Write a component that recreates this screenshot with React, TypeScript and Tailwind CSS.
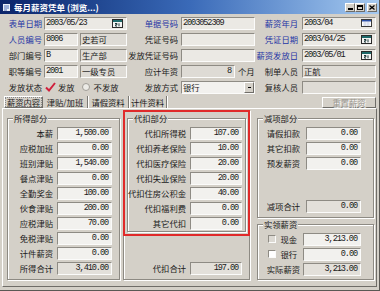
import React from 'react';

const NUM = "font-['Liberation_Mono',monospace] text-[8.6px] tracking-[-1.1px]";
const SUNK = 'border border-t-[#8e8b84] border-l-[#8e8b84] border-r-[#fbfbfa] border-b-[#fbfbfa]';
const RAISED = 'border border-t-white border-l-white border-r-[#6f6d68] border-b-[#6f6d68]';

function Field({ className = '', children }: { className?: string; children?: React.ReactNode }) {
  return (
    <div className={`h-[13px] flex items-center px-[1px] overflow-hidden whitespace-nowrap ${SUNK} ${className}`}>
      {children}
    </div>
  );
}

function Label({ className = '', blue, children }: { className?: string; blue?: boolean; children: React.ReactNode }) {
  return (
    <div className={`text-right whitespace-nowrap leading-none ${blue ? 'text-[#1f35a5]' : 'text-[#1a1a1a]'} ${className}`}>
      {children}
    </div>
  );
}

function CalIcon({ blank }: { blank?: boolean }) {
  if (blank) {
    return (
      <svg width="11" height="8" viewBox="0 0 11 8" className="ml-auto mr-[2px] shrink-0">
        <rect x="0.5" y="0.5" width="10" height="7" fill="#fff" stroke="#3a3a3a" />
        <rect x="1" y="1" width="9" height="1.5" fill="#2a4fa8" />
        <path d="M2 4h7M2 6h7M4 3v4M7 3v4" stroke="#b8c4dc" strokeWidth="0.6" />
      </svg>
    );
  }
  return (
    <svg width="11" height="9" viewBox="0 0 11 9" className="ml-auto mr-[2px] shrink-0">
      <rect x="0.5" y="0.5" width="10" height="8" fill="#f4f4f4" stroke="#2a2a2a" />
      <rect x="1" y="1" width="9" height="2" fill="#1e6a6a" />
      <path d="M3 4.5h2v1.2H3.6v1.4H5M7 4.3v3" stroke="#1e3a3a" strokeWidth="1" fill="none" />
    </svg>
  );
}

function Group({ title, className = '', children }: { title?: string; className?: string; children: React.ReactNode }) {
  return (
    <div className={`relative flex flex-col border border-[#8d8a83] shadow-[inset_1px_1px_0_#fff,1px_1px_0_#fff] ${className}`}>
      {title && (
        <span className="absolute -top-[6px] left-[5px] bg-[#d4d0c8] px-[1px] leading-[11px] text-[#1a1a1a]">{title}</span>
      )}
      {children}
    </div>
  );
}

function ValRow({ label, value, lw, iw, ml, ro }: { label: React.ReactNode; value: string; lw: string; iw: string; ml: string; ro?: boolean }) {
  return (
    <div className="h-[15px] flex items-center shrink-0">
      <div className={`${lw} flex justify-end items-center whitespace-nowrap leading-none text-[#1a1a1a]`}>{label}</div>
      <Field className={`${ml} ${iw} justify-end pr-[3px] ${ro ? 'bg-[#e3e0da]' : 'bg-[#f2f1ee]'} ${NUM}`}>{value}</Field>
    </div>
  );
}

const earnings = [
  ['本薪', '1,500.00'],
  ['应税加班', '0.00'],
  ['班别津贴', '1,540.00'],
  ['餐点津贴', '0.00'],
  ['全勤奖金', '100.00'],
  ['伙食津贴', '200.00'],
  ['应税津贴', '70.00'],
  ['免税津贴', '0.00'],
  ['计件薪资', '0.00'],
];

const withholds = [
  ['代扣所得税', '107.00'],
  ['代扣养老保险', '10.00'],
  ['代扣医疗保险', '20.00'],
  ['代扣失业保险', '20.00'],
  ['代扣住房公积金', '40.00'],
  ['代扣福利费', '0.00'],
  ['其它代扣', '0.00'],
];

const deductions = [
  ['请假扣款', '0.00'],
  ['其它扣款', '0.00'],
  ['预发薪资', '0.00'],
];

export default function App() {
  return (
    <div className="w-[380px] h-[291px] overflow-hidden bg-[#d4d0c8] font-['Noto_Sans_CJK_SC',sans-serif] text-[8.3px] text-[#1a1a1a] border-r border-b border-[#5a5854]">
      {/* title bar */}
      <div className="h-[14px] flex items-center bg-linear-to-r from-[#0a246a] via-[#3a6ab8] to-[#a6caf0] pl-[2px] pr-[2px]">
        <svg width="9" height="9" viewBox="0 0 9 9" className="shrink-0">
          <rect x="0.5" y="0.5" width="8" height="8" fill="#e8eef8" stroke="#10286a" />
          <path d="M2 3h5M2 5h5M2 7h3" stroke="#2a4fa8" strokeWidth="0.8" />
        </svg>
        <span className="ml-[3px] text-white font-bold text-[8.5px] leading-none whitespace-nowrap">每月薪资凭单 (浏览...)</span>
        <div className="ml-auto flex items-center">
          <div className={`w-[10px] h-[9px] bg-[#d4d0c8] flex items-end justify-center pb-[1px] ${RAISED}`}>
            <div className="w-[5px] h-[2px] bg-black" />
          </div>
          <div className={`w-[10px] h-[9px] bg-[#d4d0c8] flex items-center justify-center ${RAISED}`}>
            <div className="w-[6px] h-[5px] border border-black border-t-2" />
          </div>
          <div className={`ml-[2px] w-[10px] h-[9px] bg-[#d4d0c8] flex items-center justify-center ${RAISED}`}>
            <svg width="6" height="5" viewBox="0 0 6 5">
              <path d="M0.5 0.5L5.5 4.5M5.5 0.5L0.5 4.5" stroke="#000" strokeWidth="1.3" />
            </svg>
          </div>
        </div>
      </div>

      {/* header form */}
      <div className="mt-[1px] flex flex-col">
        <div className="h-[16px] flex items-center">
          <Label blue className="w-[42px]">表单日期</Label>
          <Field className={`ml-[2px] w-[83px] bg-[#ebe9e4] ${NUM}`}>
            2003/05/23
            <CalIcon />
          </Field>
          <Label blue className="w-[51px]">单据号码</Label>
          <Field className={`ml-[3px] w-[74px] bg-[#ebe9e4] ${NUM}`}>2003052309</Field>
          <Label blue className="w-[43px]">薪资年月</Label>
          <Field className={`ml-[4px] w-[74px] bg-[#ebe9e4] ${NUM}`}>
            2003/04
            <CalIcon blank />
          </Field>
        </div>

        <div className="h-[16px] flex items-center">
          <Label blue className="w-[42px]">人员编号</Label>
          <Field className={`ml-[2px] w-[34px] bg-[#ebe9e4] ${NUM}`}>8006</Field>
          <Field className="ml-[2px] w-[47px] bg-[#dedbd5]">史若可</Field>
          <Label className="w-[51px]">凭证号码</Label>
          <Field className="ml-[3px] w-[74px] bg-[#ebe9e4]" />
          <Label blue className="w-[43px]">凭证日期</Label>
          <Field className={`ml-[4px] w-[74px] bg-[#ebe9e4] ${NUM}`}>
            2003/04/25
            <CalIcon />
          </Field>
        </div>

        <div className="h-[16px] flex items-center">
          <Label className="w-[42px]">部门编号</Label>
          <Field className={`ml-[2px] w-[34px] bg-[#ebe9e4] ${NUM}`}>B</Field>
          <Field className="ml-[2px] w-[47px] bg-[#dedbd5]">生产部</Field>
          <Label className="w-[51px]">发放凭证号码</Label>
          <Field className="ml-[3px] w-[74px] bg-[#ebe9e4]" />
          <Label blue className="w-[43px]">薪资发放日</Label>
          <Field className={`ml-[4px] w-[74px] bg-[#ebe9e4] ${NUM}`}>
            2003/05/01
            <CalIcon />
          </Field>
        </div>

        <div className="h-[16px] flex items-center">
          <Label className="w-[42px]">职等编号</Label>
          <Field className={`ml-[2px] w-[34px] bg-[#ebe9e4] ${NUM}`}>2001</Field>
          <Field className="ml-[2px] w-[47px] bg-[#dedbd5]">一级专员</Field>
          <Label className="w-[51px]">应计年资</Label>
          <Field className={`ml-[3px] w-[54px] bg-[#dedbd5] justify-end pr-[3px] ${NUM}`}>8</Field>
          <span className="w-[20px] pl-[3px] leading-none whitespace-nowrap">个月</span>
          <Label className="w-[43px]">制单人员</Label>
          <Field className="ml-[4px] w-[74px] bg-[#dedbd5]">正航</Field>
        </div>

        <div className="h-[16px] flex items-center">
          <Label className="w-[42px]">发放状态</Label>
          <div className="ml-[2px] w-[83px] flex items-center">
            <svg width="11" height="10" viewBox="0 0 11 10" className="ml-[1px] shrink-0">
              <path d="M1 5.5L4 8.5L10 1" stroke="#d0203c" strokeWidth="2" fill="none" />
            </svg>
            <span className="ml-[2px] leading-none">发放</span>
            <div className="ml-[7px] w-[8px] h-[8px] rounded-full border border-[#a09d97] bg-[#ecebe7]" />
            <span className="ml-[4px] leading-none">不发放</span>
          </div>
          <Label className="w-[51px]">发放方式</Label>
          <Field className="ml-[3px] w-[74px] bg-[#f2f1ee] pr-0">
            银行
            <div className={`ml-auto w-[10px] h-[11px] bg-[#d4d0c8] flex items-center justify-center ${RAISED}`}>
              <div className="w-[3px] h-[1px] bg-black" />
            </div>
          </Field>
          <Label className="w-[43px]">复核人员</Label>
          <Field className="ml-[4px] w-[74px] bg-[#dedbd5]" />
        </div>
      </div>

      {/* tabs */}
      <div className="mt-[1px] h-[12px] flex items-stretch pl-[4px] pr-[3px]">
        <div className={`w-[39px] flex items-center justify-center leading-none ${RAISED}`}>
          <span className="outline outline-1 outline-dotted outline-[#888] px-[1px]">薪资内容</span>
        </div>
        <div className="w-[45px] flex items-center justify-center leading-none border-r border-[#7a7873] shadow-[1px_0_0_#fff]">津贴/加班</div>
        <div className="w-[41px] flex items-center justify-center leading-none border-r border-[#7a7873] shadow-[1px_0_0_#fff]">请假资料</div>
        <div className="w-[38px] flex items-center justify-center leading-none border-r border-[#7a7873] shadow-[1px_0_0_#fff]">计件资料</div>
        <div className={`ml-auto mt-[1px] w-[54px] h-[11px] flex items-center justify-center leading-none text-[#9a978f] [text-shadow:1px_1px_0_#fff] ${RAISED}`}>
          重置薪资
        </div>
      </div>

      {/* content panel */}
      <div className={`relative mx-[2px] h-[179px] flex pl-[4px] pt-[9px] ${RAISED}`}>
        <Group title="所得部分" className="w-[113px] h-[162px] pt-[7px]">
          {earnings.map(([l, v]) => (
            <ValRow key={l} label={l} value={v} lw="w-[45px]" ml="ml-[4px]" iw="w-[55px]" />
          ))}
          <ValRow label="所得合计" value="3,410.00" lw="w-[45px]" ml="ml-[4px]" iw="w-[55px]" ro />
        </Group>

        <Group className="ml-[3px] -mt-[8px] w-[127px] h-[170px] pb-[3px]">
          <Group title="代扣部分" className="mt-[7px] mx-[3px] h-[114px] pt-[7px]">
            {withholds.map(([l, v]) => (
              <ValRow key={l} label={l} value={v} lw="w-[58px]" ml="ml-[4px]" iw="w-[52px]" />
            ))}
          </Group>
          <div className="mt-auto">
            <ValRow label="代扣合计" value="197.00" lw="w-[62px]" ml="ml-[4px]" iw="w-[52px]" ro />
          </div>
        </Group>

        <div className="ml-[7px] w-[117px] flex flex-col">
          <Group title="减项部分" className="h-[100px] pt-[7px] pb-[3px]">
            {deductions.map(([l, v]) => (
              <ValRow key={l} label={l} value={v} lw="w-[42px]" ml="ml-[6px]" iw="w-[55px]" />
            ))}
            <div className="mt-auto">
              <ValRow label="减项合计" value="0.00" lw="w-[42px]" ml="ml-[6px]" iw="w-[55px]" ro />
            </div>
          </Group>
          <Group title="实领薪资" className="mt-[6px] h-[56px] pt-[7px]">
            <ValRow
              label={
                <>
                  <span className={`w-[8px] h-[8px] bg-[#dcd9d3] ${SUNK}`} />
                  <span className="ml-[4px] mr-[3px]">现金</span>
                </>
              }
              value="3,213.00"
              lw="w-[42px]"
              ml="ml-[3px]"
              iw="w-[58px]"
            />
            <ValRow
              label={
                <>
                  <span className={`w-[8px] h-[8px] bg-white ${SUNK}`} />
                  <span className="ml-[4px] mr-[3px]">银行</span>
                </>
              }
              value="0.00"
              lw="w-[42px]"
              ml="ml-[3px]"
              iw="w-[58px]"
            />
            <ValRow label="实际薪资" value="3,213.00" lw="w-[42px]" ml="ml-[3px]" iw="w-[58px]" ro />
          </Group>
        </div>

        {/* highlight frame */}
        <div className="absolute left-[120px] top-[1px] w-[127px] h-[126px] border-2 border-[#e02a2a] pointer-events-none" />
      </div>
    </div>
  );
}
